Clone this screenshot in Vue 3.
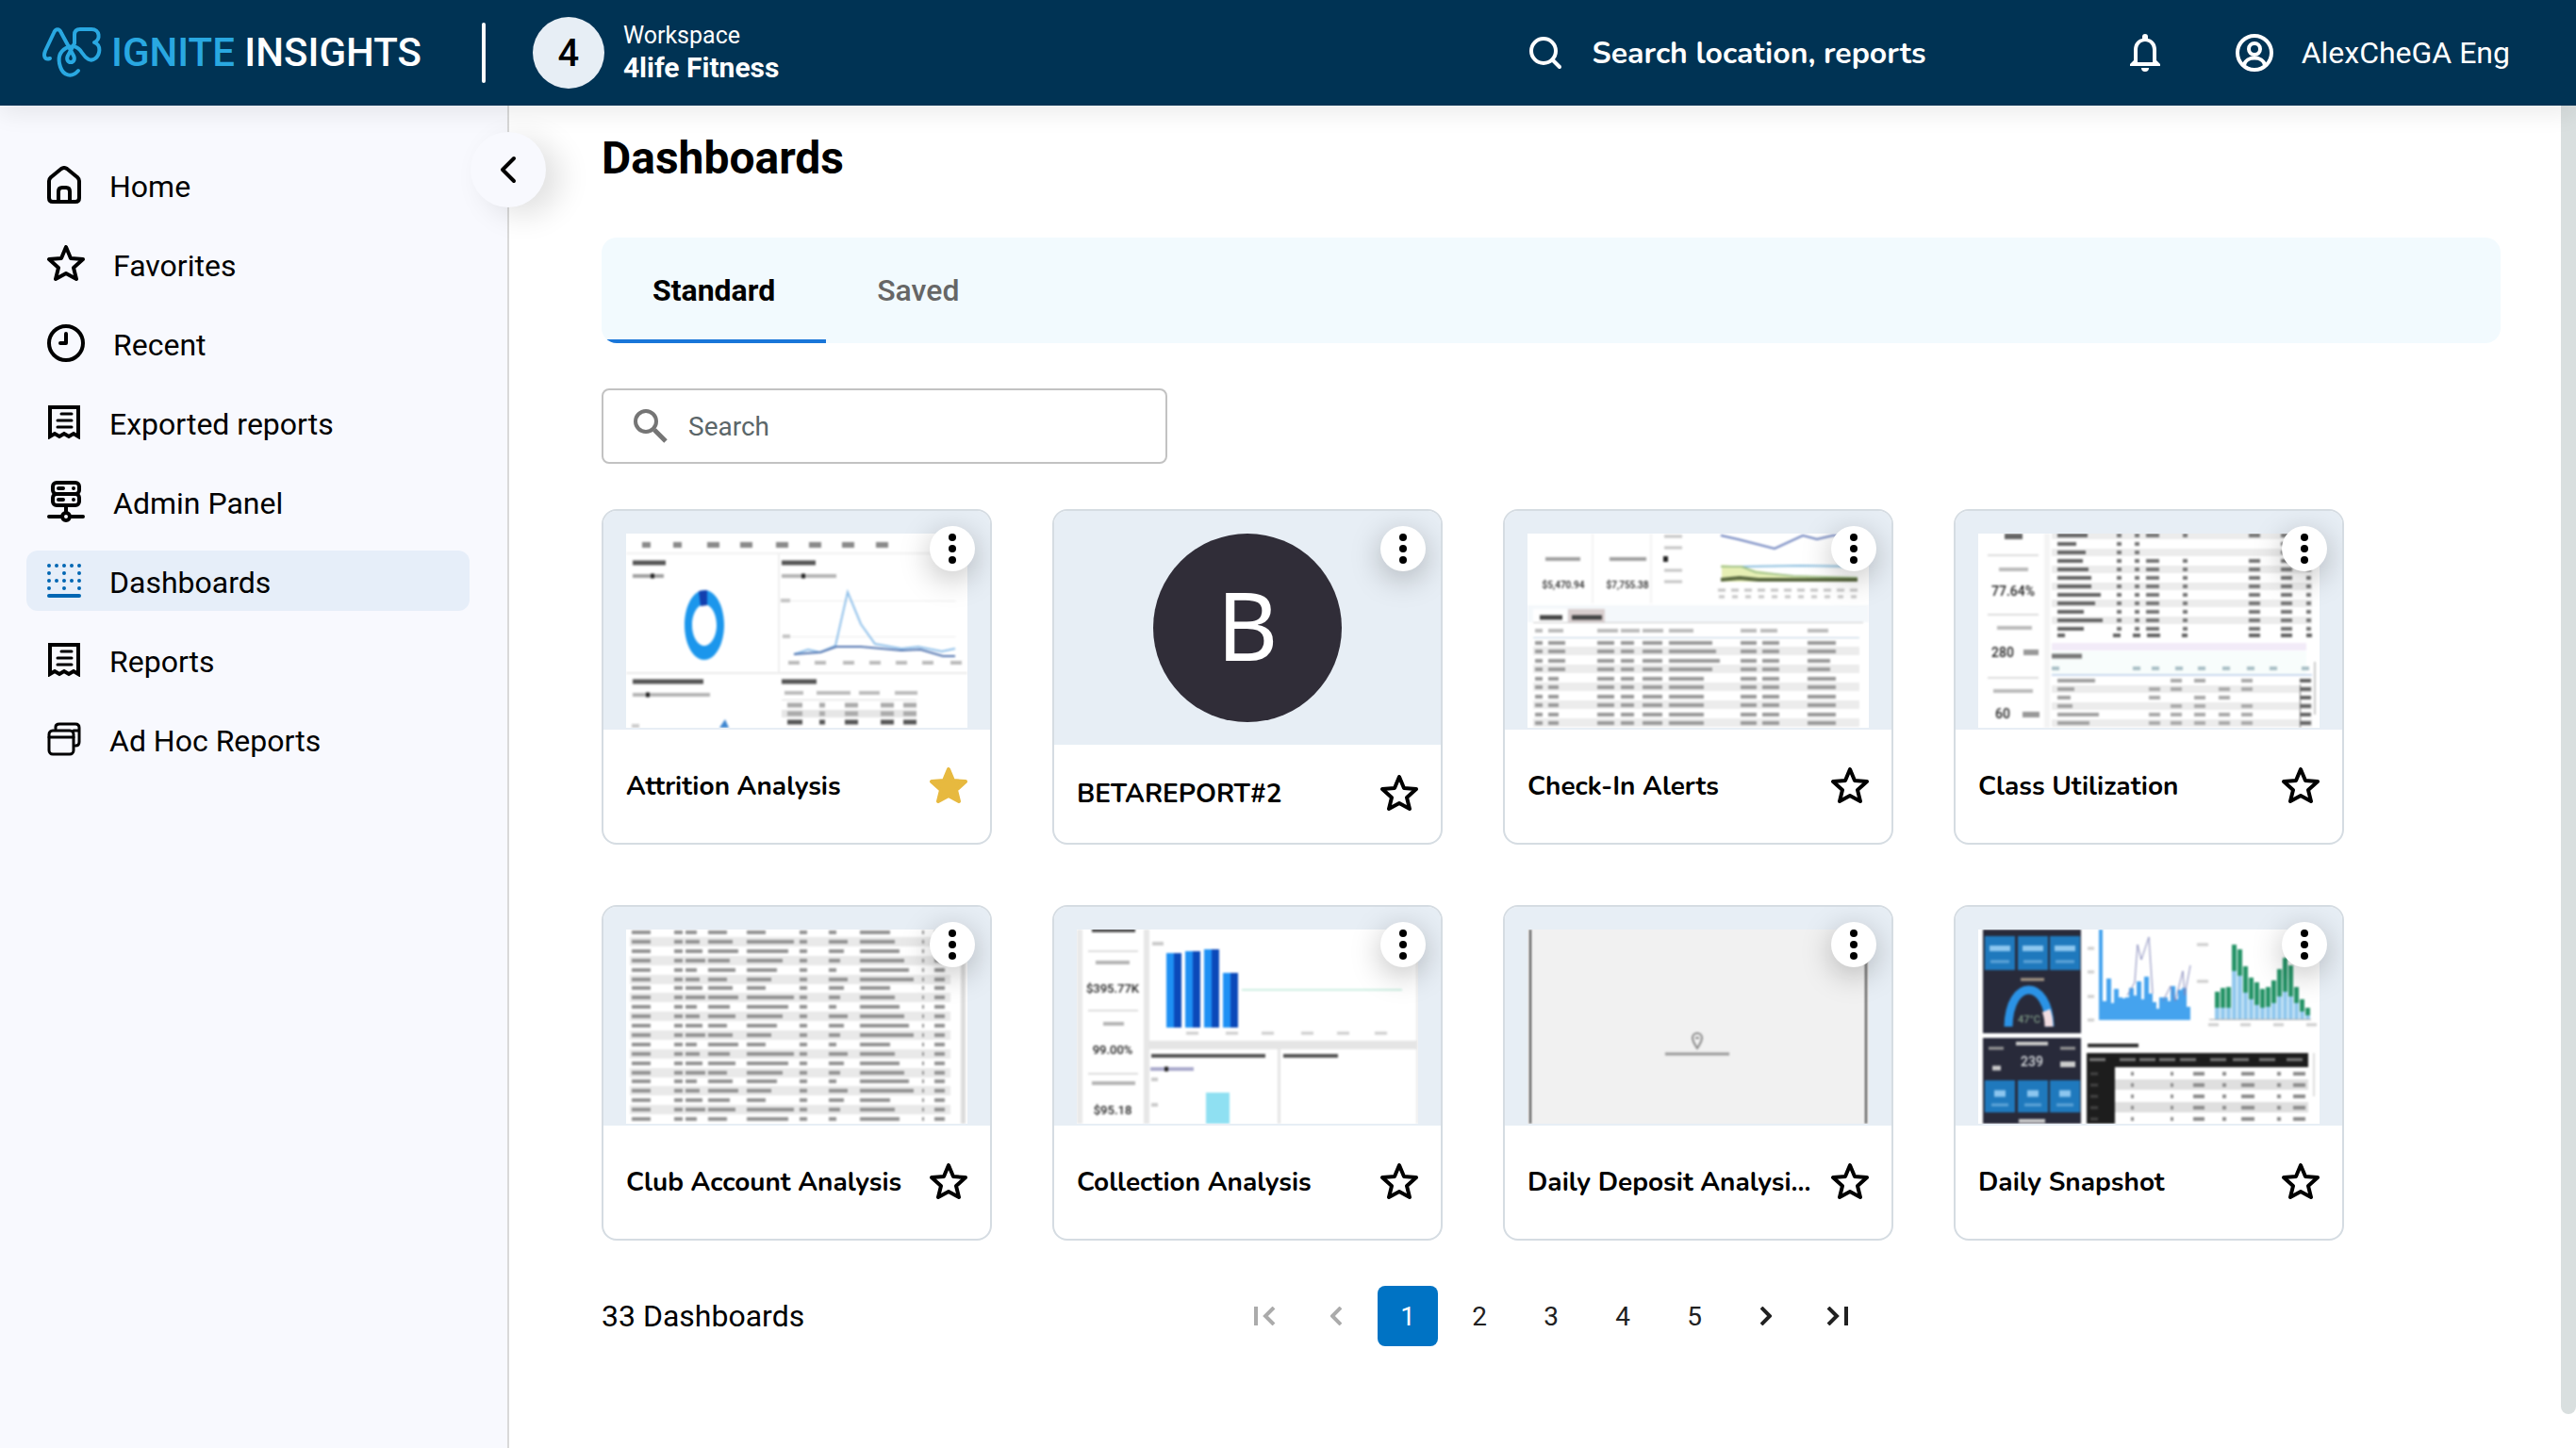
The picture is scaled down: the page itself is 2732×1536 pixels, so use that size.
<script setup>
import { ref } from 'vue'

const navItems = [
  { label: 'Home', icon: 'home', w: 36, h: 40 },
  { label: 'Favorites', icon: 'star', w: 40, h: 40 },
  { label: 'Recent', icon: 'clock', w: 40, h: 40 },
  { label: 'Exported reports', icon: 'receipt', w: 36, h: 36 },
  { label: 'Admin Panel', icon: 'server', w: 40, h: 44 },
  { label: 'Dashboards', icon: 'grid', w: 36, h: 36 },
  { label: 'Reports', icon: 'receipt', w: 36, h: 36 },
  { label: 'Ad Hoc Reports', icon: 'windows', w: 36, h: 36 },
]
const activeNav = ref('Dashboards')
const tabs = ['Standard', 'Saved']
const activeTab = ref('Standard')
const query = ref('')
const page = ref(1)

const GREY = '#a2a2a2'
const DARK = '#555'
const STRIPE = '#ececec'

function thumb(bg, draw) {
  const t = { bg, rects: [], words: [], paths: [], texts: [] }
  draw({
    rect: (x, y, w, h, fill) => t.rects.push({ x, y, w, h, fill }),
    word: (x, y, w, color = GREY, size = 4) => t.words.push({ d: `M${x} ${y}h${w}`, color, size }),
    path: (d, stroke, width = 2, fill = 'none') => t.paths.push({ d, stroke, width, fill }),
    text: (x, y, size, fill, value) => t.texts.push({ x, y, size, fill, value }),
  })
  return t
}

const attrition = thumb('#fff', ({ rect, word, path }) => {
  ;[23, 56, 92, 127, 165, 200, 235, 271].forEach((x, i) => word(x - 6, 12, i > 1 ? 13 : 9, '#8a8a8a', 6))
  rect(0, 20, 362, 2, '#f1f1f1')
  rect(161, 22, 2, 125, '#efefef')
  rect(0, 147, 362, 2, '#ebebeb')
  word(7, 31, 35, DARK, 5)
  word(7, 45, 33)
  word(26, 45, 4, '#222', 5)
  word(165, 31, 36, DARK, 5)
  word(165, 45, 58, '#b5b5b5')
  word(186, 45, 4, '#222', 5)
  rect(165, 71, 185, 1, '#eee')
  rect(165, 109, 185, 1, '#eee')
  word(164, 71, 10, '#c5c5c5')
  word(166, 109, 8, '#c5c5c5')
  path('M83 60c12 0 21 17 21 37s-9 37-21 37-21-17-21-37 9-37 21-37zM83 75c-7 0-13 10-13 22s6 22 13 22 13-10 13-22-6-22-13-22z', 'none', 0, '#1b96ec')
  path('M77 61l9-1v16l-7 1z', 'none', 0, '#123fae')
  path('M178 128l15-5 13 3 16-7 13-57 14 34 15 21 28 5 18-2 25 5 14-3', '#8fc0ea', 2)
  path('M178 128l28-2 17-6h26l43 4 20-1 24 7h13', '#5275b0', 2)
  ;[178, 206, 236, 264, 292, 320, 350].forEach((x) => word(x - 6, 137, 12, '#bbb', 4))
  word(7, 157, 75, DARK, 5)
  word(7, 171, 82, '#b5b5b5')
  word(21, 171, 4, '#222', 5)
  path('M99 206l6-9 4 9z', 'none', 0, '#3d86d0')
  word(165, 157, 37, DARK, 5)
  rect(165, 176, 143, 1, '#ddd')
  rect(165, 187, 143, 8, '#e6e6e6')
  ;[[168, 20], [202, 36], [247, 22], [285, 24]].forEach(([x, w]) => word(x, 169, w, '#bcbcbc'))
  ;[182, 191, 200].forEach((y, i) => {
    ;[[171, 16], [205, 6], [232, 14], [270, 14], [294, 14]].forEach(([x, w]) => word(x, y, w, i === 2 ? '#555' : '#aaa', 5))
  })
  word(6, 204, 8, '#ccc')
})

const checkIn = thumb('#fff', ({ rect, word, path, text }) => {
  rect(68, 0, 2, 74, '#f3f3f3')
  rect(130, 0, 2, 74, '#f3f3f3')
  word(19, 27, 37)
  word(87, 27, 39)
  text(38, 58, 10, '#222', '$5,470.94')
  text(106, 58, 10, '#222', '$7,755.38')
  ;[3, 15, 39, 51].forEach((y) => word(145, y, 19, '#c4c4c4', 3))
  word(144, 27, 5, '#222', 6)
  path('M206 33l22 2 14 4 40 6 68 4v2H206z', 'none', 0, '#e6efb4')
  path('M205 2l18 4 39 10 30-14 15 4 17-4h26', '#6b80bd', 2)
  path('M205 35h25l60-1 60 1', '#8dbfdf', 2)
  path('M205 35h22l15 6 40 4 68 2', '#a3c38b', 2)
  path('M205 49l20-2 20 2 105 0', '#59683f', 4)
  for (let i = 0; i < 11; i++) {
    word(202 + i * 14, 60, 8, '#c3c3c3', 3)
    word(203 + i * 14, 67, 6, '#c3c3c3', 3)
  }
  rect(0, 76, 362, 18, '#f4f8fb')
  rect(6, 80, 36, 14, '#fff')
  rect(43, 80, 39, 14, '#d9cfcf')
  rect(6, 94, 350, 1, '#ccc')
  word(13, 89, 24, '#444', 5)
  word(47, 89, 32, '#444', 5)
  rect(6, 110, 346, 1, '#bcd0e2')
  ;[[8, 8], [22, 16], [74, 22], [99, 20], [122, 22], [150, 26], [226, 17], [247, 18], [297, 22]].forEach(([x, w]) => word(x, 103, w, '#bcbcbc', 4))
  for (let r = 0; r < 10; r++) {
    const y = 116 + Math.round(r * 9.45)
    if (r % 2) rect(6, y - 5, 346, 9, STRIPE)
    ;[[8, 8], [22, r < 4 ? 18 : 11], [74, 18], [99, 14], [122, 21], [150, r < 4 ? 46 + (r % 3) * 4 : 37], [226, 17], [249, 18], [297, r > 1 && r < 4 ? 24 : 30]].forEach(([x, w]) => word(x, y, w, '#9a9a9a', 4))
  }
})

const classUse = thumb('#fff', ({ rect, word, text }) => {
  rect(70, 0, 6, 206, '#f4f4f4')
  word(28, 3, 19, '#666', 6)
  text(37, 66, 14, '#222', '77.64%')
  text(26, 131, 14, '#222', '280')
  text(26, 196, 14, '#222', '60')
  ;[22, 85, 152].forEach((y) => rect(10, y, 54, 2, '#ddd'))
  word(22, 38, 31, '#bbb')
  word(20, 100, 37, '#bbb')
  word(16, 167, 42, '#bbb')
  word(48, 126, 16, '#999', 6)
  word(47, 192, 18, '#999', 6)
  const names = [32, 20, 30, 27, 33, 36, 36, 46, 40, 28, 48, 28]
  names.forEach((w, r) => {
    const y = 2 + r * 9
    if (r % 2 === 0) rect(78, y - 4, 276, 8, STRIPE)
    word(84, y, w, '#666', 4)
    ;[[147, 5], [166, 5], [178, 14], [217, 5], [287, 12], [321, 12], [348, 5]].forEach(([x, cw], c) => {
      if (!((r === 1 || r === 2) && c > 1 && c < 5)) word(x, y, cw, '#777', 4)
    })
  })
  ;[[84, 8], [143, 8], [164, 8], [179, 14], [216, 6], [287, 12], [321, 12], [348, 6]].forEach(([x, w]) => word(x, 108, w, '#666', 4))
  rect(78, 116, 270, 8, '#f2ebf8')
  rect(78, 125, 270, 24, '#f8fdfc')
  word(78, 130, 32, '#777', 5)
  ;[78, 164, 184, 209, 233, 259, 285, 309, 343].forEach((x) => word(x, 143, 8, '#a9bfc6', 4))
  rect(78, 149, 276, 2, '#c8d8ee')
  ;[40, 18, 14, 16, 44, 34].forEach((w, r) => {
    const y = 156 + r * 9
    if (r % 2) rect(78, y - 4, 276, 8, STRIPE)
    word(84, y, w, '#a2a2a2', 4)
    ;[181, 204, 229, 255, 279].forEach((x, c) => {
      if ((r + c) % 3 !== 0 || r > 3) word(x, y, 12, '#aaa', 4)
    })
    word(341, y, 12, '#666', 4)
  })
  rect(341, 160, 1, 46, '#777')
  rect(356, 136, 2, 56, '#ccc')
})

const club = thumb('#fff', ({ rect, word }) => {
  for (let r = 0; r < 21; r++) {
    const y = 3 + Math.round(r * 9.9)
    if (r % 2) rect(4, y - 5, 340, 10, '#e9e9e9')
    const cols = [
      [6, 20], [51, 9], [63, 12 + ((r * 5) % 4) * 3], [87, 20 + ((r * 7) % 5) * 3], [128, 20 + ((r * 11) % 6) * 6], [184, 8],
      [215, 8 + ((r * 3) % 4) * 4], [248, 32 + ((r * 13) % 6) * 5], [314, 2], [327, 11],
    ]
    cols.forEach(([x, w]) => word(x, y, w, '#949494', 4))
  }
  rect(355, 0, 5, 206, '#dcdcdc')
})

const collection = thumb('#fff', ({ rect, word, text }) => {
  rect(0, 0, 6, 206, '#e9e9e9')
  rect(71, 0, 6, 206, '#e7e7e7')
  rect(77, 118, 285, 9, '#e5e5e5')
  rect(213, 125, 3, 81, '#e5e5e5')
  rect(360, 0, 2, 206, '#e9e9e9')
  word(16, 1, 46, '#555', 4)
  text(38, 67, 13, '#222', '$395.77K')
  text(38, 132, 13, '#222', '99.00%')
  text(38, 196, 13, '#222', '$95.18')
  ;[22, 85, 152].forEach((y) => rect(12, y, 53, 2, '#ddd'))
  word(20, 35, 36, '#b5b5b5')
  word(28, 100, 22, '#b5b5b5')
  word(16, 163, 46, '#b5b5b5')
  ;[[95, 25], [115, 23], [135, 21], [155, 46]].forEach(([x, y]) => {
    rect(x, y, 8, 104 - y, '#1e90f4')
    rect(x + 8, y, 8, 104 - y, '#0b49b9')
  })
  rect(175, 63, 170, 2, '#cdeee2')
  word(80, 15, 12, '#ccc')
  ;[116, 158, 196, 238, 276, 316].forEach((x) => word(x, 110, 13, '#ccc', 3))
  word(79, 134, 121, '#555', 4)
  word(219, 134, 58, '#555', 4)
  word(78, 148, 46, '#aac')
  word(93, 148, 4, '#222', 5)
  word(79, 159, 7, '#ccc')
  word(79, 186, 7, '#ccc')
  rect(137, 173, 25, 33, '#8fe0f2')
})

const deposit = thumb('#f1f1f1', ({ rect, word, path }) => {
  rect(2, 0, 2, 206, '#4a4a4a')
  rect(358, 0, 2, 206, '#4a4a4a')
  path('M180 126c-4-6-5-8-5-11a5 5 0 0 1 10 0c0 3-1 5-5 11z', '#888', 2)
  path('M178 115h4', '#888', 2)
  word(146, 132, 68, '#999', 3)
})

const snapshot = thumb('#fff', ({ rect, word, path, text }) => {
  rect(5, 0, 104, 110, '#282a3a')
  rect(5, 115, 104, 91, '#282a3a')
  ;[7, 42, 76].forEach((x) => {
    rect(x, 7, 32, 36, '#1f79bd')
    rect(x, 160, 32, 34, '#1f79bd')
    word(x + 5, 20, 22, '#8cc6ef', 6)
    word(x + 6, 34, 20, '#5fa5d8', 3)
    word(x + 10, 174, 12, '#8cc6ef', 7)
    word(x + 7, 186, 18, '#5fa5d8', 3)
  })
  word(45, 53, 25, '#a99a88', 3)
  path('M32 103c1-52 42-52 44 0', '#2b93e6', 9)
  path('M72 86q3 7 3 17', '#f1dde2', 9)
  text(54, 99, 11, '#7f9b86', '47°C')
  word(40, 121, 34, '#c7c7c7', 4)
  word(11, 126, 16, '#999', 3)
  word(87, 126, 16, '#999', 3)
  text(57, 145, 14, '#d5d8dc', '239')
  word(15, 147, 9, '#ccc', 5)
  word(87, 143, 16, '#ccc', 6)
  word(43, 203, 28, '#ccc', 4)
  ;[20, 45, 71, 96].forEach((y) => word(116, y, 7, '#ccc', 3))

  const area = [0, 76, 52, 78, 63, 72, 73, 72, 62, 70, 55, 74, 50, 68, 77, 84, 72, 72, 76, 60, 74, 64, 62, 82]
  area.forEach((y, i) => rect(128 + i * 4, y, i === 0 ? 4 : 5, 96 - y, '#45a3ee'))
  path('M158 70l8-14 3-40 4 16 8-24 4 60M196 76l8-16 5 16 8-32 2 26 6-32', '#8085b8', 1)

  const tops = [66, 62, 61, 16, 21, 39, 51, 56, 63, 61, 54, 42, 30, 38, 61, 74, 83]
  const mids = [83, 83, 83, 44, 49, 67, 74, 80, 83, 82, 78, 71, 66, 71, 78, 87, 91]
  tops.forEach((y, i) => {
    const x = 251 + i * 6
    rect(x, y, 5, mids[i] - y, '#269468')
    rect(x, mids[i], 5, 95 - mids[i], '#93c9ee')
  })
  rect(245, 95, 108, 1, '#aaa')
  ;[244, 278, 313, 348].forEach((x) => word(x, 101, 11, '#ccc', 3))
  ;[16, 55].forEach((y) => word(232, y, 12, '#ccc', 3))
  word(116, 123, 54, '#333', 4)
  rect(115, 131, 235, 15, '#1d1d1d')
  rect(115, 146, 30, 60, '#1d1d1d')
  ;[118, 150, 171, 192, 214, 246, 270, 298, 327].forEach((x) => word(x, 138, 17, '#7d7d7d', 3))
  ;[153, 165, 177, 189, 201].forEach((y, r) => {
    if (r % 2) rect(145, y - 6, 205, 11, '#dfdfdf')
    ;[[162, 3], [204, 3], [228, 12], [259, 4], [279, 14], [317, 4], [334, 13]].forEach(([x, w]) => word(x, y, w, '#8d8d8d', 4))
    word(119, y, 8, '#444', 3)
  })
  rect(355, 131, 2, 46, '#ddd')
})

const cards = ref([
  { title: 'Attrition Analysis', art: attrition, favorite: true },
  { title: 'BETAREPORT#2', initial: 'B', favorite: false },
  { title: 'Check-In Alerts', art: checkIn, favorite: false },
  { title: 'Class Utilization', art: classUse, favorite: false },
  { title: 'Club Account Analysis', art: club, favorite: false },
  { title: 'Collection Analysis', art: collection, favorite: false },
  { title: 'Daily Deposit Analysis', short: 'Daily Deposit Analysi...', art: deposit, favorite: false },
  { title: 'Daily Snapshot', art: snapshot, favorite: false },
])
</script>

<template>
  <div class="app">
    <header class="topbar">
      <a class="brand" href="#" aria-label="Ignite Insights">
        <svg class="brand-mark" width="64" height="56" viewBox="0 0 64 56" fill="none" stroke="#29a8e1" stroke-width="4" stroke-linecap="round" stroke-linejoin="round" aria-hidden="true">
          <path d="M9 34c-6 2-7-3-5-8L13 7c2-5 6-5 8 0l13 24c2 4 0 7-3 7s-5-3-3-7l7-13V9c0-4 2-6 6-6h12c9 0 10 11 3 14 8 3 6 13 1 17s-10 0-14-6-10-9-17-5-9 11-6 20 12 12 19 4" />
        </svg>
        <span class="brand-name"><span class="brand-accent">IGNITE</span> INSIGHTS</span>
      </a>
      <span class="divider"></span>
      <button class="workspace" type="button">
        <span class="workspace-avatar">4</span>
        <span class="workspace-text">
          <span class="workspace-label">Workspace</span>
          <strong class="workspace-name">4life Fitness</strong>
        </span>
      </button>
      <div class="topbar-right">
        <button class="global-search" type="button">
          <svg width="36" height="36" viewBox="0 0 36 36" fill="none" stroke="#fff" stroke-width="4" stroke-linecap="round" aria-hidden="true">
            <circle cx="16" cy="16" r="13" /><path d="M26 26l7 7" />
          </svg>
          <span>Search location, reports</span>
        </button>
        <button class="icon-button" type="button" aria-label="Notifications">
          <svg width="32" height="40" viewBox="0 0 32 40" aria-hidden="true">
            <path fill="#fff" fill-rule="evenodd" d="M16 0a3 3 0 0 1 3 3v2c6 1 9 6 9 12v11l4 4v2H0v-2l4-4V17C4 11 7 6 13 5V3a3 3 0 0 1 3-3zM16 8c-5 0-8 4-8 9v13h16V17c0-5-3-9-8-9zM12 36h8a4 4 0 0 1-8 0z" />
          </svg>
        </button>
        <button class="user" type="button">
          <svg width="40" height="40" viewBox="0 0 40 40" fill="none" stroke="#fff" stroke-width="4" aria-hidden="true">
            <circle cx="20" cy="20" r="18" /><circle cx="20" cy="16" r="6" /><path d="M9 33c2-10 20-10 22 0" />
          </svg>
          <span>AlexCheGA Eng</span>
        </button>
      </div>
    </header>

    <div class="body">
      <aside class="sidebar">
        <nav aria-label="Main">
          <a
            v-for="item in navItems"
            :key="item.label"
            href="#"
            class="nav-item"
            :class="{ active: item.label === activeNav }"
            @click.prevent="activeNav = item.label"
          >
            <svg :width="item.w" :height="item.h" :viewBox="`0 0 ${item.w} ${item.h}`" fill="none" stroke="currentColor" stroke-width="4" stroke-linecap="round" stroke-linejoin="round" aria-hidden="true">
              <template v-if="item.icon === 'home'">
                <path d="M2 16c0-2 1-3 2-4L15 3q3-2 6 0l11 9c1 1 2 2 2 4v18q0 4-4 4H6q-4 0-4-4z" />
                <path d="M12 37V27q0-4 4-4h4q4 0 4 4v10" />
              </template>
              <path v-else-if="item.icon === 'star'" d="M20 2l5 12 13 1-10 9 3 12-11-6-11 6 3-12L2 15l13-1z" />
              <template v-else-if="item.icon === 'clock'">
                <circle cx="20" cy="20" r="18" /><path d="M20 10v10h-6" />
              </template>
              <template v-else-if="item.icon === 'receipt'">
                <path d="M3 33V2h30v31l-5-3-5 3-5-3-5 3-5-3z" stroke-linejoin="miter" />
                <path d="M15 9h11M11 16h15M11 23h15" stroke-width="3" />
              </template>
              <template v-else-if="item.icon === 'server'">
                <rect x="6" y="2" width="28" height="12" rx="4" />
                <rect x="6" y="14" width="28" height="12" rx="4" />
                <path d="M12 8h5M28 8h0M12 20h5M28 20h0M20 27v6M2 38h12M26 38h12" />
                <circle cx="20" cy="38" r="4" />
              </template>
              <template v-else-if="item.icon === 'grid'">
                <path d="M2 2h33M2 18h33" stroke-dasharray="0 8" />
                <path d="M2 10h33M2 26h33" stroke-dasharray="0 16" />
                <path d="M2 34h32" />
              </template>
              <template v-else>
                <g stroke-width="3">
                  <path d="M9 7V5q0-3 4-3h17q4 0 4 4v15q0 4-4 4M28 9h6" />
                  <rect x="2" y="9" width="26" height="25" rx="4" />
                  <path d="M2 16h26" />
                </g>
              </template>
            </svg>
            <span>{{ item.label }}</span>
          </a>
        </nav>
        <button class="collapse" type="button" aria-label="Collapse sidebar">
          <svg width="20" height="32" viewBox="0 0 20 32" fill="none" stroke="#000" stroke-width="4" stroke-linecap="round" stroke-linejoin="round" aria-hidden="true">
            <path d="M16 4L4 16l12 12" />
          </svg>
        </button>
      </aside>

      <main class="content">
        <h1>Dashboards</h1>
        <div class="tabs" role="tablist">
          <button
            v-for="tab in tabs"
            :key="tab"
            type="button"
            role="tab"
            class="tab"
            :class="{ selected: tab === activeTab }"
            :aria-selected="tab === activeTab"
            @click="activeTab = tab"
          >{{ tab }}</button>
        </div>

        <label class="search">
          <svg width="36" height="36" viewBox="0 0 36 36" fill="none" stroke="#757575" aria-hidden="true">
            <circle cx="13" cy="13" r="11" stroke-width="4" /><path d="M22 22l12 12" stroke-width="5" />
          </svg>
          <input v-model="query" type="text" placeholder="Search" aria-label="Search dashboards" />
        </label>

        <section class="cards">
          <article v-for="card in cards" :key="card.title" class="card">
            <div class="media" :class="{ plain: card.initial }">
              <div v-if="card.initial" class="initial">{{ card.initial }}</div>
              <svg v-else class="thumb" viewBox="0 0 362 206" aria-hidden="true">
                <rect width="362" height="206" :fill="card.art.bg" />
                <g class="soft">
                  <rect v-for="(r, i) in card.art.rects" :key="'r' + i" :x="r.x" :y="r.y" :width="r.w" :height="r.h" :fill="r.fill" />
                  <path v-for="(w, i) in card.art.words" :key="'w' + i" :d="w.d" :stroke="w.color" :stroke-width="w.size" fill="none" />
                  <path v-for="(p, i) in card.art.paths" :key="'p' + i" :d="p.d" :stroke="p.stroke" :stroke-width="p.width" :fill="p.fill" fill-rule="evenodd" />
                  <text v-for="(t, i) in card.art.texts" :key="'t' + i" :x="t.x" :y="t.y" :font-size="t.size" :fill="t.fill" text-anchor="middle">{{ t.value }}</text>
                </g>
              </svg>
            </div>
            <button class="menu" type="button" :aria-label="`Options for ${card.title}`">
              <svg width="8" height="32" viewBox="0 0 8 32" aria-hidden="true">
                <circle cx="4" cy="4" r="4" /><circle cx="4" cy="16" r="4" /><circle cx="4" cy="28" r="4" />
              </svg>
            </button>
            <div class="card-foot">
              <h2>{{ card.short || card.title }}</h2>
              <button class="favorite" :class="{ on: card.favorite }" type="button" :aria-label="`Favorite ${card.title}`" :aria-pressed="card.favorite" @click="card.favorite = !card.favorite">
                <svg width="40" height="40" viewBox="0 0 40 40" stroke-width="4" stroke-linejoin="round" aria-hidden="true">
                  <path d="M20 2l5 12 13 1-10 9 3 12-11-6-11 6 3-12L2 15l13-1z" />
                </svg>
              </button>
            </div>
          </article>
        </section>

        <footer class="footer">
          <span class="count">33 Dashboards</span>
          <nav class="pages" aria-label="Pagination">
            <button type="button" aria-label="First page" :disabled="page === 1">
              <svg width="24" height="20" viewBox="0 0 24 20" fill="none" stroke="currentColor" stroke-width="4" aria-hidden="true"><path d="M3 0v20M22 1l-9 9 9 9" /></svg>
            </button>
            <button type="button" aria-label="Previous page" :disabled="page === 1" @click="page--">
              <svg width="12" height="20" viewBox="0 0 12 20" fill="none" stroke="currentColor" stroke-width="4" aria-hidden="true"><path d="M11 1l-9 9 9 9" /></svg>
            </button>
            <button v-for="n in 5" :key="n" type="button" :class="{ current: n === page }" @click="page = n">{{ n }}</button>
            <button type="button" aria-label="Next page" @click="page++">
              <svg width="12" height="20" viewBox="0 0 12 20" fill="none" stroke="currentColor" stroke-width="4" aria-hidden="true"><path d="M1 1l9 9-9 9" /></svg>
            </button>
            <button type="button" aria-label="Last page">
              <svg width="24" height="20" viewBox="0 0 24 20" fill="none" stroke="currentColor" stroke-width="4" aria-hidden="true"><path d="M21 0v20M2 1l9 9-9 9" /></svg>
            </button>
          </nav>
        </footer>
      </main>
      <div class="scroll-track"><div class="scroll-thumb"></div></div>
    </div>
  </div>
</template>

<style>
body {
  margin: 0;
  background: #fff;
}
</style>

<style scoped>
.app {
  display: flex;
  flex-direction: column;
  min-height: 100vh;
  font-family: Roboto, "Liberation Sans", sans-serif;
  color: #000;
}
button {
  font: inherit;
  color: inherit;
  background: none;
  border: 0;
  padding: 0;
  cursor: pointer;
}
a {
  color: inherit;
  text-decoration: none;
}
svg {
  display: block;
  flex: none;
}

.topbar {
  position: relative;
  z-index: 3;
  display: flex;
  align-items: center;
  height: 112px;
  padding: 0 70px 0 44px;
  box-sizing: border-box;
  background: #003354;
  color: #fff;
  box-shadow: 0 8px 24px rgba(0, 0, 0, 0.08);
}
.brand {
  display: flex;
  align-items: center;
  gap: 10px;
}
.brand-name {
  font-size: 42px;
  font-weight: 500;
  line-height: 48px;
}
.brand-accent {
  color: #29a8e1;
}
.divider {
  width: 4px;
  height: 64px;
  margin: 0 50px 0 64px;
  border-radius: 2px;
  background: #fff;
}
.workspace {
  display: flex;
  align-items: center;
  gap: 20px;
  text-align: left;
}
.workspace-avatar {
  display: flex;
  align-items: center;
  justify-content: center;
  width: 76px;
  height: 76px;
  border-radius: 50%;
  background: #e7eef5;
  color: #000;
  font-size: 40px;
  font-weight: 500;
}
.workspace-text {
  display: flex;
  flex-direction: column;
}
.workspace-label {
  font-size: 25px;
  line-height: 32px;
}
.workspace-name {
  font-size: 30px;
  line-height: 36px;
}
.topbar-right {
  display: flex;
  align-items: center;
  margin-left: auto;
}
.global-search {
  display: flex;
  align-items: center;
  gap: 32px;
  margin-right: 216px;
  font-family: Nunito, "Open Sans", sans-serif;
  font-size: 32px;
  font-weight: 700;
}
.icon-button {
  margin-right: 80px;
}
.user {
  display: flex;
  align-items: center;
  gap: 30px;
  font-size: 32px;
}

.body {
  display: flex;
  flex: 1;
}
.sidebar {
  position: relative;
  z-index: 1;
  flex: none;
  width: 540px;
  padding: 52px 40px 52px 28px;
  box-sizing: border-box;
  background: #f8f9fe;
  border-right: 2px solid #d9d9d9;
}
.sidebar nav {
  display: flex;
  flex-direction: column;
  gap: 20px;
}
.nav-item {
  display: flex;
  align-items: center;
  gap: 30px;
  height: 64px;
  padding: 0 22px;
  border-radius: 12px;
  font-size: 32px;
  line-height: 40px;
}
.nav-item span {
  padding-top: 4px;
}
.nav-item.active {
  background: #e6eef9;
}
.nav-item.active svg {
  color: #0066b3;
}
.collapse {
  position: absolute;
  top: 28px;
  right: -41px;
  display: flex;
  align-items: center;
  justify-content: center;
  width: 80px;
  height: 80px;
  border-radius: 50%;
  background: #f8f9fe;
  box-shadow: 16px 8px 32px rgba(0, 0, 0, 0.12);
}

.content {
  flex: 1;
  min-width: 0;
  padding: 28px 64px 48px 98px;
}
h1 {
  margin: 0 0 56px;
  font-size: 48px;
  line-height: 56px;
  font-weight: 700;
}
.tabs {
  display: flex;
  height: 112px;
  margin-bottom: 48px;
  border-radius: 16px;
  overflow: hidden;
  background: #f2fafe;
}
.tab {
  padding: 4px 54px 0;
  border-bottom: 4px solid transparent;
  font-size: 32px;
  font-weight: 500;
  color: #666;
}
.tab.selected {
  border-bottom-color: #1976d9;
  font-weight: 700;
  color: #000;
}
.search {
  display: flex;
  align-items: center;
  gap: 22px;
  width: 600px;
  max-width: 100%;
  height: 80px;
  margin-bottom: 48px;
  padding: 0 32px;
  box-sizing: border-box;
  border: 2px solid #c2c2c2;
  border-radius: 8px;
}
.search input {
  flex: 1;
  min-width: 0;
  padding: 2px 0 0;
  border: 0;
  outline: 0;
  background: none;
  font: 28px/36px Roboto, sans-serif;
  color: #000;
}
.search input::placeholder {
  color: #5b6669;
  opacity: 1;
}

.cards {
  display: grid;
  grid-template-columns: repeat(auto-fill, 414px);
  gap: 64px;
}
.card {
  position: relative;
  display: flex;
  flex-direction: column;
  min-height: 356px;
  box-sizing: border-box;
  overflow: hidden;
  border: 2px solid #d5dce2;
  border-radius: 16px;
  background: #fff;
}
.media {
  padding: 24px 24px 2px;
  background: #e7eef5;
}
.media.plain {
  padding-bottom: 24px;
}
.thumb {
  width: 100%;
  height: auto;
  font-family: Roboto, sans-serif;
  font-weight: 500;
}
.soft {
  filter: blur(1px);
}
.initial {
  display: flex;
  align-items: center;
  justify-content: center;
  width: 200px;
  height: 200px;
  margin: 0 auto;
  padding-bottom: 8px;
  box-sizing: border-box;
  border-radius: 50%;
  background: #302d38;
  color: #fff;
  font: 100px/1 "Noto Sans", sans-serif;
}
.menu {
  position: absolute;
  top: 16px;
  right: 16px;
  display: flex;
  align-items: center;
  justify-content: center;
  width: 48px;
  height: 48px;
  border-radius: 50%;
  background: #fff;
  box-shadow: 0 8px 32px rgba(0, 0, 0, 0.25);
}
.card-foot {
  display: flex;
  flex: 1;
  align-items: center;
  justify-content: space-between;
  padding: 0 24px;
}
h2 {
  margin: 0;
  font: 700 28px/40px Nunito, "Open Sans", sans-serif;
  white-space: nowrap;
}
.favorite svg {
  fill: none;
  stroke: #000;
}
.favorite.on svg {
  fill: #e7b93f;
  stroke: #e7b93f;
}

.footer {
  display: grid;
  grid-template-columns: 1fr auto 1fr;
  align-items: center;
  margin-top: 48px;
}
.count {
  font-size: 32px;
}
.pages {
  display: flex;
  gap: 12px;
}
.pages button {
  display: flex;
  align-items: center;
  justify-content: center;
  width: 64px;
  height: 64px;
  border-radius: 8px;
  font-size: 28px;
  color: #212121;
}
.pages button:disabled {
  color: #ababab;
}
.pages button.current {
  background: #0073c4;
  color: #fff;
}

.scroll-track {
  display: flex;
  flex: none;
  width: 16px;
  padding-bottom: 36px;
}
.scroll-thumb {
  flex: 1;
  border-radius: 0 0 8px 8px;
  background: #d9dfdf;
}
</style>
